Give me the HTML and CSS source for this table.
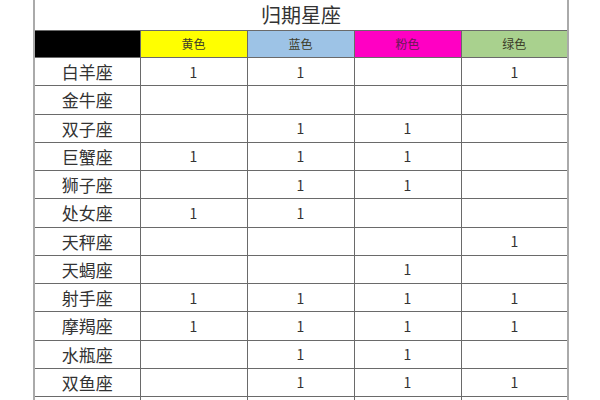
FILE: index.html
```html
<!DOCTYPE html>
<html lang="zh">
<head>
<meta charset="utf-8">
<link rel="stylesheet" href="styles.css">
</head>
<body>
<table class="chart">
  <colgroup>
    <col class="c-name"><col class="c"><col class="c"><col class="c"><col class="c">
  </colgroup>
  <tr class="title-row"><td colspan="5" class="title">归期星座</td></tr>
  <tr class="head-row">
    <td class="h-black"></td>
    <td class="h-yellow">黄色</td>
    <td class="h-blue">蓝色</td>
    <td class="h-pink">粉色</td>
    <td class="h-green">绿色</td>
  </tr>
  <tr><td class="name">白羊座</td><td>1</td><td>1</td><td></td><td>1</td></tr>
  <tr><td class="name">金牛座</td><td></td><td></td><td></td><td></td></tr>
  <tr><td class="name">双子座</td><td></td><td>1</td><td>1</td><td></td></tr>
  <tr><td class="name">巨蟹座</td><td>1</td><td>1</td><td>1</td><td></td></tr>
  <tr><td class="name">狮子座</td><td></td><td>1</td><td>1</td><td></td></tr>
  <tr><td class="name">处女座</td><td>1</td><td>1</td><td></td><td></td></tr>
  <tr><td class="name">天秤座</td><td></td><td></td><td></td><td>1</td></tr>
  <tr><td class="name">天蝎座</td><td></td><td></td><td>1</td><td></td></tr>
  <tr><td class="name">射手座</td><td>1</td><td>1</td><td>1</td><td>1</td></tr>
  <tr><td class="name">摩羯座</td><td>1</td><td>1</td><td>1</td><td>1</td></tr>
  <tr><td class="name">水瓶座</td><td></td><td>1</td><td>1</td><td></td></tr>
  <tr><td class="name">双鱼座</td><td></td><td>1</td><td>1</td><td>1</td></tr>
  <tr><td class="name"></td><td></td><td></td><td></td><td></td></tr>
</table>
</body>
</html>
```
FILE: styles.css
```css
html, body {
  margin: 0;
  padding: 0;
  background: #fff;
  overflow: hidden;
  height: 400px;
}
body {
  font-family: "Noto Sans CJK SC", "Noto Sans", sans-serif;
  color: #333;
}
.chart {
  margin-left: 33px;
  width: 534px;
  border-collapse: collapse;
  table-layout: fixed;
  border-left: 2px solid #aaa;
  border-right: 2px solid #aaa;
}
.c-name { width: 106px; }
.c { width: 107px; }
.chart td {
  border: 1px solid #6a6a6a;
  height: 27.25px;
  padding: 0;
  text-align: center;
  vertical-align: middle;
  font-size: 14px;
  line-height: 1;
}
.chart td.name {
  font-size: 17px;
  color: #333;
}
.chart tr.title-row td {
  border-top: none;
  border-left: 2px solid #aaa;
  border-right: 2px solid #aaa;
  height: 30px;
  font-size: 20px;
  color: #333;
}
.chart tr.head-row td {
  height: 26px;
  font-size: 12px;
  color: #3d3d2a;
}
.h-black { background: #000; }
.h-yellow { background: #ffff00; }
.h-blue { background: #9dc3e6; }
.h-pink { background: #ff00c3; color: #6a1a55 !important; }
.h-green { background: #a9d18e; }
```
